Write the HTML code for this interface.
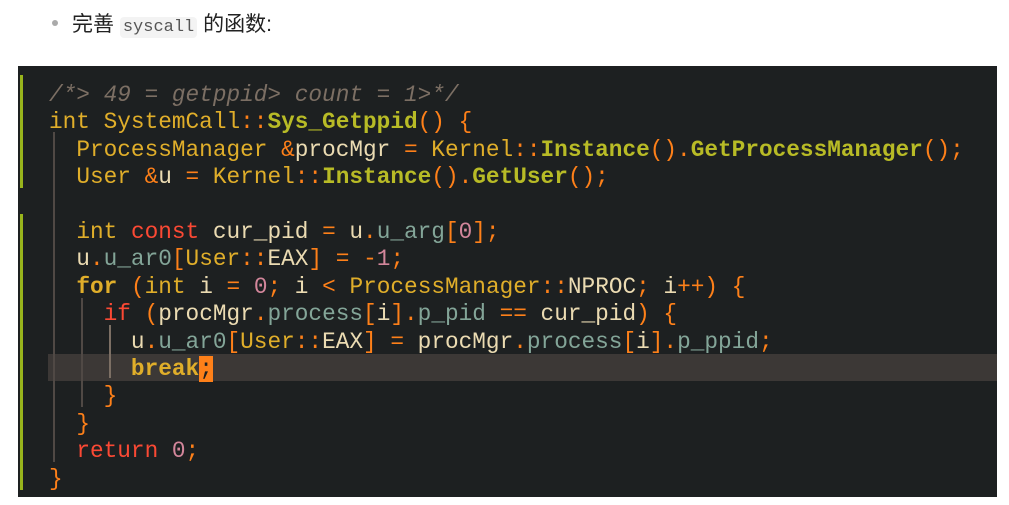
<!DOCTYPE html>
<html><head><meta charset="utf-8"><style>
body{margin:0;background:#fff;width:1009px;height:505px;position:relative;overflow:hidden}
.top{position:absolute;left:72px;top:8px;font:21px "Liberation Sans","Noto Sans CJK SC",sans-serif;color:#222}
.top code{font:17px "Liberation Mono",monospace;color:#555;background:#f3f3f3;border-radius:4px;padding:1px 3px}
.dot{position:absolute;left:52px;top:20px;width:6px;height:6px;border-radius:3px;background:#aaa}
.code{position:absolute;left:18px;top:66px;width:979px;height:431px;background:#1d2021}
pre{position:absolute;left:31px;top:16px;margin:0;font:22.75px/27.4px "Liberation Mono",monospace;color:#ebdbb2}
.hl{position:absolute;left:30px;top:288px;width:949px;height:27px;background:#3c3836}
.g{position:absolute;left:2px;width:3px;background:#98b41c}
.ig{position:absolute;width:2px;background:#504945}
.c{color:#7c6f64;font-style:italic}.y{color:#e0ae2a}.gr{color:#b8bb26;font-weight:bold}.o{color:#fe8019}.t{color:#83a598}.r{color:#fb4934}.p{color:#d3869b}.cur{background:#fe8019;color:#1d2021}
</style></head><body>
<div class="dot"></div>
<div class="top">完善 <code>syscall</code> 的函数:</div>
<div class="code">
<div class="g" style="top:9px;height:113px"></div>
<div class="g" style="top:148px;height:276px"></div>
<div class="hl"></div>
<div class="ig" style="left:35px;top:66px;height:330px"></div>
<div class="ig" style="left:63px;top:232px;height:109px"></div>
<div class="ig" style="left:91px;top:259px;height:53px;background:#7c6f64"></div>
<pre><span class="c">/*&gt; 49 = getppid&gt; count = 1&gt;*/</span>
<span class="y">int SystemCall</span><span class="o">::</span><span class="gr">Sys_Getppid</span><span class="o">() {</span>
  <span class="y">ProcessManager </span><span class="o">&amp;</span>procMgr <span class="o">=</span> <span class="y">Kernel</span><span class="o">::</span><span class="gr">Instance</span><span class="o">().</span><span class="gr">GetProcessManager</span><span class="o">();</span>
  <span class="y">User </span><span class="o">&amp;</span>u <span class="o">=</span> <span class="y">Kernel</span><span class="o">::</span><span class="gr">Instance</span><span class="o">().</span><span class="gr">GetUser</span><span class="o">();</span>

  <span class="y">int</span> <span class="r">const</span> cur_pid <span class="o">=</span> u<span class="o">.</span><span class="t">u_arg</span><span class="o">[</span><span class="p">0</span><span class="o">];</span>
  u<span class="o">.</span><span class="t">u_ar0</span><span class="o">[</span><span class="y">User</span><span class="o">::</span>EAX<span class="o">]</span> <span class="o">=</span> <span class="o">-</span><span class="p">1</span><span class="o">;</span>
  <span class="y" style="font-weight:bold">for</span> <span class="o">(</span><span class="y">int</span> i <span class="o">=</span> <span class="p">0</span><span class="o">;</span> i <span class="o">&lt;</span> <span class="y">ProcessManager</span><span class="o">::</span>NPROC<span class="o">;</span> i<span class="o">++) {</span>
    <span class="r">if</span> <span class="o">(</span>procMgr<span class="o">.</span><span class="t">process</span><span class="o">[</span>i<span class="o">].</span><span class="t">p_pid</span> <span class="o">==</span> cur_pid<span class="o">) {</span>
      u<span class="o">.</span><span class="t">u_ar0</span><span class="o">[</span><span class="y">User</span><span class="o">::</span>EAX<span class="o">]</span> <span class="o">=</span> procMgr<span class="o">.</span><span class="t">process</span><span class="o">[</span>i<span class="o">].</span><span class="t">p_ppid</span><span class="o">;</span>
      <span class="y" style="font-weight:bold">break</span><span class="cur">;</span>
    <span class="o">}</span>
  <span class="o">}</span>
  <span class="r">return</span> <span class="p">0</span><span class="o">;</span>
<span class="o">}</span></pre>
</div>
</body></html>
